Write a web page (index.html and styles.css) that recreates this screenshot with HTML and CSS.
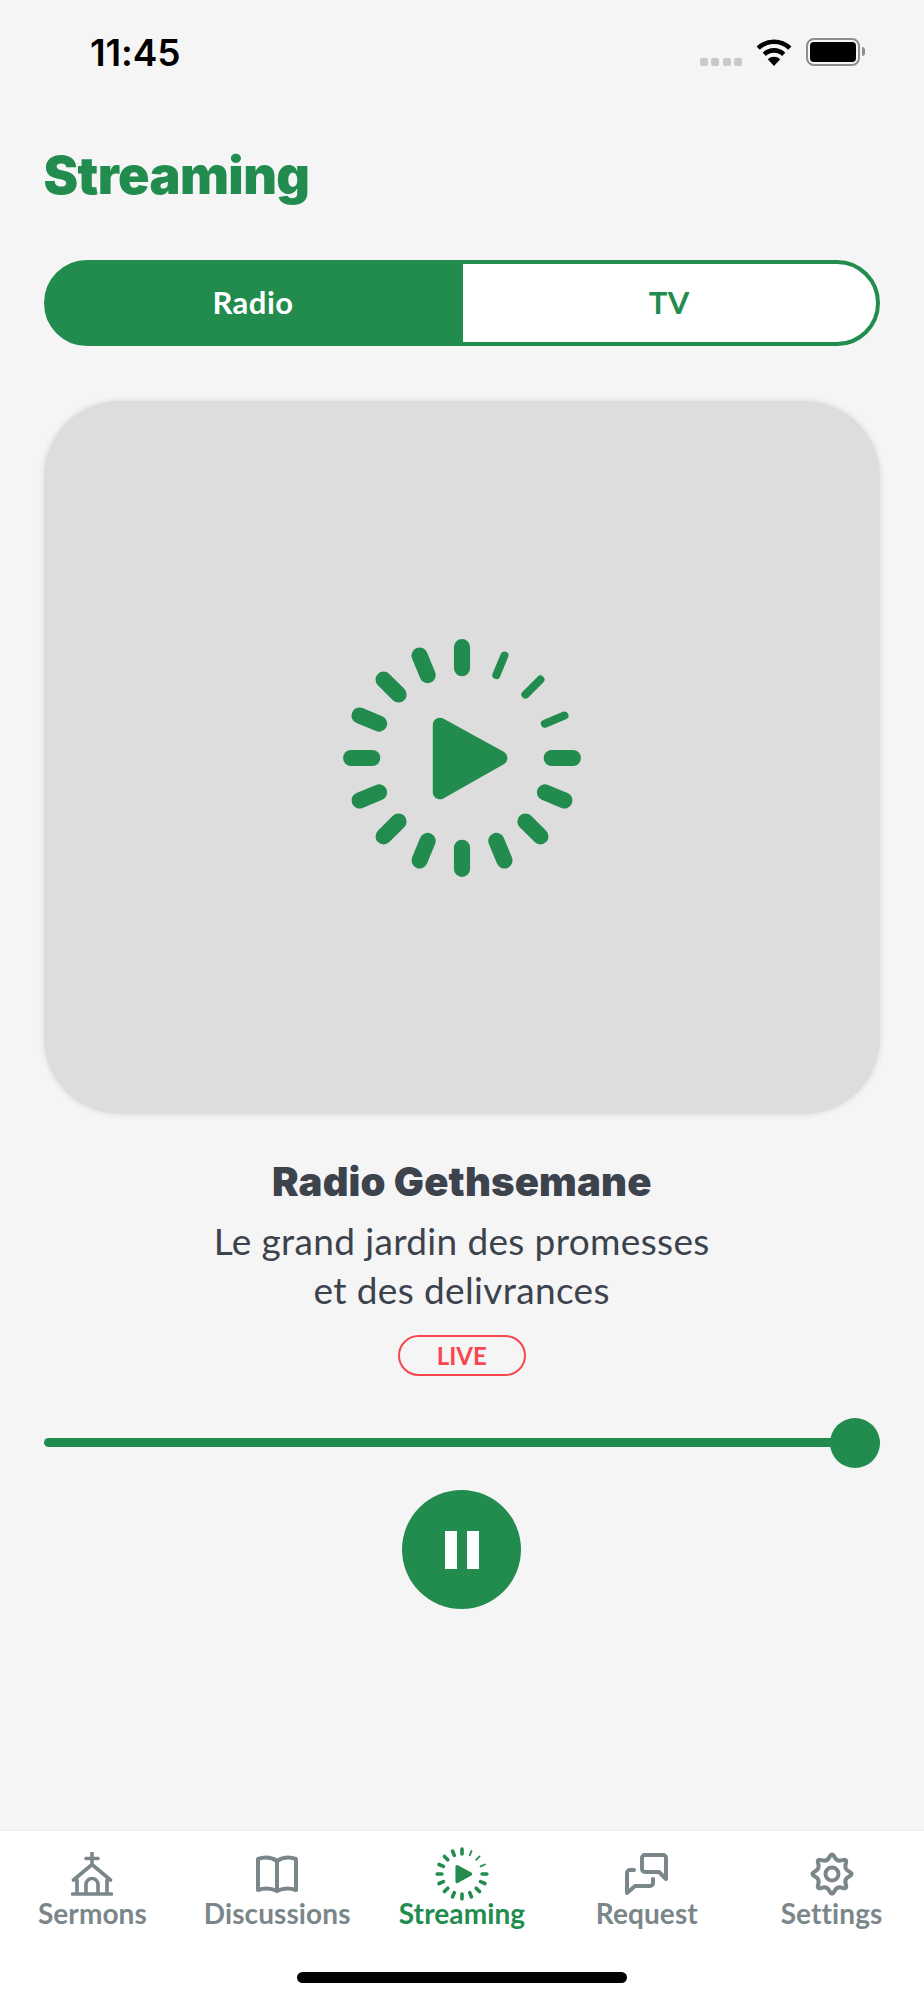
FILE: index.html
```html
<!DOCTYPE html>
<html lang="fr">
<head>
<meta charset="utf-8">
<title>Streaming</title>
<link rel="stylesheet" href="styles.css">
</head>
<body>
<svg class="defs" width="0" height="0" aria-hidden="true">
  <symbol id="radio" viewBox="-124 -124 248 248">
    <g stroke-linecap="round" stroke="currentColor" fill="none" stroke-width="16">
      <line y1="-89" y2="-110"/>
      <line y1="-89" y2="-110" stroke-width="8" transform="rotate(22.5)"/>
      <line y1="-89" y2="-110" stroke-width="8" transform="rotate(45)"/>
      <line y1="-89" y2="-110" stroke-width="8" transform="rotate(67.5)"/>
      <line y1="-89" y2="-110" transform="rotate(90)"/>
      <line y1="-89" y2="-110" transform="rotate(112.5)"/>
      <line y1="-89" y2="-110" transform="rotate(135)"/>
      <line y1="-89" y2="-110" transform="rotate(157.5)"/>
      <line y1="-89" y2="-110" transform="rotate(180)"/>
      <line y1="-89" y2="-110" transform="rotate(202.5)"/>
      <line y1="-89" y2="-110" transform="rotate(225)"/>
      <line y1="-89" y2="-110" transform="rotate(247.5)"/>
      <line y1="-89" y2="-110" transform="rotate(270)"/>
      <line y1="-89" y2="-110" transform="rotate(292.5)"/>
      <line y1="-89" y2="-110" transform="rotate(315)"/>
      <line y1="-89" y2="-110" transform="rotate(337.5)"/>
    </g>
    <polygon points="-22,-33 38,0 -22,34" fill="currentColor" stroke="currentColor" stroke-width="14" stroke-linejoin="round"/>
  </symbol>
</svg>
<div class="app">
  <header class="status">
    <span class="time">11:45</span>
    <div class="status-icons">
      <div class="signal"><i></i><i></i><i></i><i></i></div>
      <svg class="wifi" width="36" height="28" viewBox="0 0 36 28">
        <path d="M2.2 10.2A22.5 22.5 0 0 1 33.8 10.2M8.3 16.3A14 14 0 0 1 27.7 16.3" fill="none" stroke="#000" stroke-width="4.6"/>
        <path d="M18 28L11.8 21.2A9 9 0 0 1 24.2 21.2Z" fill="#000"/>
      </svg>
      <div class="battery"><div class="battery-fill"></div></div>
    </div>
  </header>
  <main class="main">
    <h1 class="title">Streaming</h1>
    <div class="segment">
      <div class="seg seg-on">Radio</div>
      <div class="seg seg-off">TV</div>
    </div>
    <div class="artwork">
      <svg class="art-icon"><use href="#radio"/></svg>
    </div>
    <h2 class="station">Radio Gethsemane</h2>
    <p class="tagline">Le grand jardin des promesses<br>et des delivrances</p>
    <div class="live">LIVE</div>
    <div class="slider"><div class="thumb"></div></div>
    <button class="pause" aria-label="Pause"><i></i><i></i></button>
  </main>
  <nav class="tabs">
    <div class="tab">
      <svg class="tab-icon" width="42" height="44" viewBox="0 0 42 44" fill="none" stroke="currentColor" stroke-width="3.6" stroke-linecap="round" stroke-linejoin="round">
        <path d="M21 1V13M15 6.5H27M2.5 28L21 12.5L39.5 28M6 28V42M36 28V42M1.5 42H40.5M15 42V32.5a6 6 0 0 1 12 0V42" />
      </svg>
      <span>Sermons</span>
    </div>
    <div class="tab">
      <svg class="tab-icon" width="44" height="44" viewBox="0 0 44 44" fill="none" stroke="currentColor" stroke-width="4" stroke-linejoin="round">
        <path d="M22 9C16 5 9 5 3 7V38C9 36 16 36 22 39C28 36 35 36 41 38V7C35 5 28 5 22 9V39"/>
      </svg>
      <span>Discussions</span>
    </div>
    <div class="tab tab-on">
      <svg class="tab-radio"><use href="#radio"/></svg>
      <span>Streaming</span>
    </div>
    <div class="tab">
      <svg class="tab-icon" width="44" height="44" viewBox="0 0 44 44" fill="none" stroke="currentColor" stroke-width="4" stroke-linejoin="round" stroke-linecap="round">
        <path d="M20 3H38a3 3 0 0 1 3 3V27L34 20H20a3 3 0 0 1-3-3V6a3 3 0 0 1 3-3Z"/>
        <path d="M9 18H5a3 3 0 0 0-3 3V41L10 34H25a3 3 0 0 0 3-3V27"/>
      </svg>
      <span>Request</span>
    </div>
    <div class="tab">
      <svg class="tab-icon" width="44" height="44" viewBox="-22 -22 44 44" fill="none" stroke="currentColor" stroke-width="4" stroke-linejoin="round">
        <path d="M17 2.49Q12.01 4.97 13.78 10.26Q15.56 15.56 10.26 13.78Q4.97 12.01 2.49 17Q0 22 -2.49 17Q-4.97 12.01 -10.26 13.78Q-15.56 15.56 -13.78 10.26Q-12.01 4.97 -17 2.49Q-22 0 -17 -2.49Q-12.01 -4.97 -13.78 -10.26Q-15.56 -15.56 -10.26 -13.78Q-4.97 -12.01 -2.49 -17Q0 -22 2.49 -17Q4.97 -12.01 10.26 -13.78Q15.56 -15.56 13.78 -10.26Q12.01 -4.97 17 -2.49Q22 0 17 2.49Z"/>
        <circle r="6.5"/>
      </svg>
      <span>Settings</span>
    </div>
  </nav>
  <div class="home-area"><div class="home-bar"></div></div>
</div>
</body>
</html>
```
FILE: styles.css
```css
* { box-sizing: border-box; }
html, body { margin: 0; padding: 0; }
body { background: #f5f5f5; font-family: "Lato", "Open Sans", sans-serif; color: #3c434c; }
.defs { position: absolute; }
.app { width: 924px; height: 2000px; display: flex; flex-direction: column; overflow: hidden; }

.status { height: 100px; padding: 31px 64px 0 90px; display: flex; justify-content: space-between; align-items: flex-start; flex: none; }
.time { font-family: "Inter", sans-serif; font-weight: 600; font-size: 37px; line-height: 44px; color: #000; letter-spacing: -0.1px; }
.status-icons { display: flex; align-items: center; margin-top: 7px; height: 28px; }
.signal { display: flex; gap: 3.5px; margin-top: 20px; margin-right: 14px; }
.signal i { width: 8px; height: 8px; border-radius: 2px; background: #c9c9c9; display: block; }
.wifi { display: block; margin-right: 14px; }
.battery { width: 54px; height: 28px; border: 2.5px solid #8e8e8e; border-radius: 8px; padding: 2px; position: relative; }
.battery::after { content: ""; position: absolute; right: -7px; top: 7px; width: 3px; height: 9px; background: #8e8e8e; border-radius: 0 3px 3px 0; }
.battery-fill { width: 100%; height: 100%; background: #000; border-radius: 4px; }

.main { flex: 1; padding: 0 44px 0 43.5px; display: flex; flex-direction: column; align-items: center; }
.title { align-self: flex-start; margin: 44px 0 0; font-family: "Inter", sans-serif; font-size: 52px; line-height: 64px; font-weight: 900; color: #218c4e; letter-spacing: -0.6px; }

.segment { align-self: stretch; height: 86px; margin-top: 52px; display: flex; border: 4px solid #218c4e; border-radius: 43px; overflow: hidden; background: linear-gradient(90deg, #218c4e 415px, #fff 415px); }
.seg { display: flex; align-items: center; justify-content: center; font-size: 31px; font-weight: 700; letter-spacing: 0.5px; padding-bottom: 3px; }
.seg-on { color: #fff; flex: 0 0 415px; padding-right: 4px; }
.seg-off { color: #218c4e; flex: 1; }

.artwork { align-self: stretch; height: 713px; margin-top: 55px; border-radius: 76px; background: #dddddd; box-shadow: 0 0 6px rgba(0, 0, 0, 0.12); display: flex; align-items: center; justify-content: center; color: #218c4e; }
.art-icon { width: 250px; height: 250px; display: block; }

.station { margin: 40px 0 0; font-family: "Inter", sans-serif; font-size: 40px; line-height: 56px; font-weight: 900; color: #3c434c; letter-spacing: 0.15px; }
.tagline { margin: 6px 0 0; text-align: center; font-size: 37px; line-height: 49px; font-weight: 400; color: #3c434c; letter-spacing: 0.35px; }
.live { margin-top: 21px; width: 128px; height: 41px; border: 2px solid #f6474f; border-radius: 21px; display: flex; align-items: center; justify-content: center; color: #f6474f; font-size: 24px; font-weight: 700; }

.slider { align-self: stretch; height: 9px; margin-top: 62px; background: #218c4e; border-radius: 5px; position: relative; }
.thumb { position: absolute; right: 0; top: -20px; width: 50px; height: 50px; border-radius: 50%; background: #218c4e; }
.pause { margin-top: 43px; width: 119px; height: 119px; border: 0; border-radius: 50%; background: #218c4e; display: flex; align-items: center; justify-content: center; gap: 10px; padding: 0; }
.pause i { display: block; width: 12px; height: 38px; background: #fff; }

.tabs { flex: none; height: 113px; background: #fff; border-top: 1px solid #ececec; display: grid; grid-template-columns: repeat(5, 1fr); padding-top: 21px; }
.tab { display: flex; flex-direction: column; align-items: center; color: #7b868a; font-size: 28px; font-weight: 700; letter-spacing: 0.1px; }
.tab span { line-height: 34px; margin-top: 0; }
.tab-icon { display: block; height: 44px; flex: none; }
.tab-on { color: #218c4e; }
.tab-radio { display: block; width: 56px; height: 56px; margin: -6px 0 -6px; flex: none; }

.home-area { flex: none; height: 57px; background: #fff; display: flex; justify-content: center; padding-top: 29px; }
.home-bar { width: 330px; height: 11px; background: #000; border-radius: 6px; }
```
